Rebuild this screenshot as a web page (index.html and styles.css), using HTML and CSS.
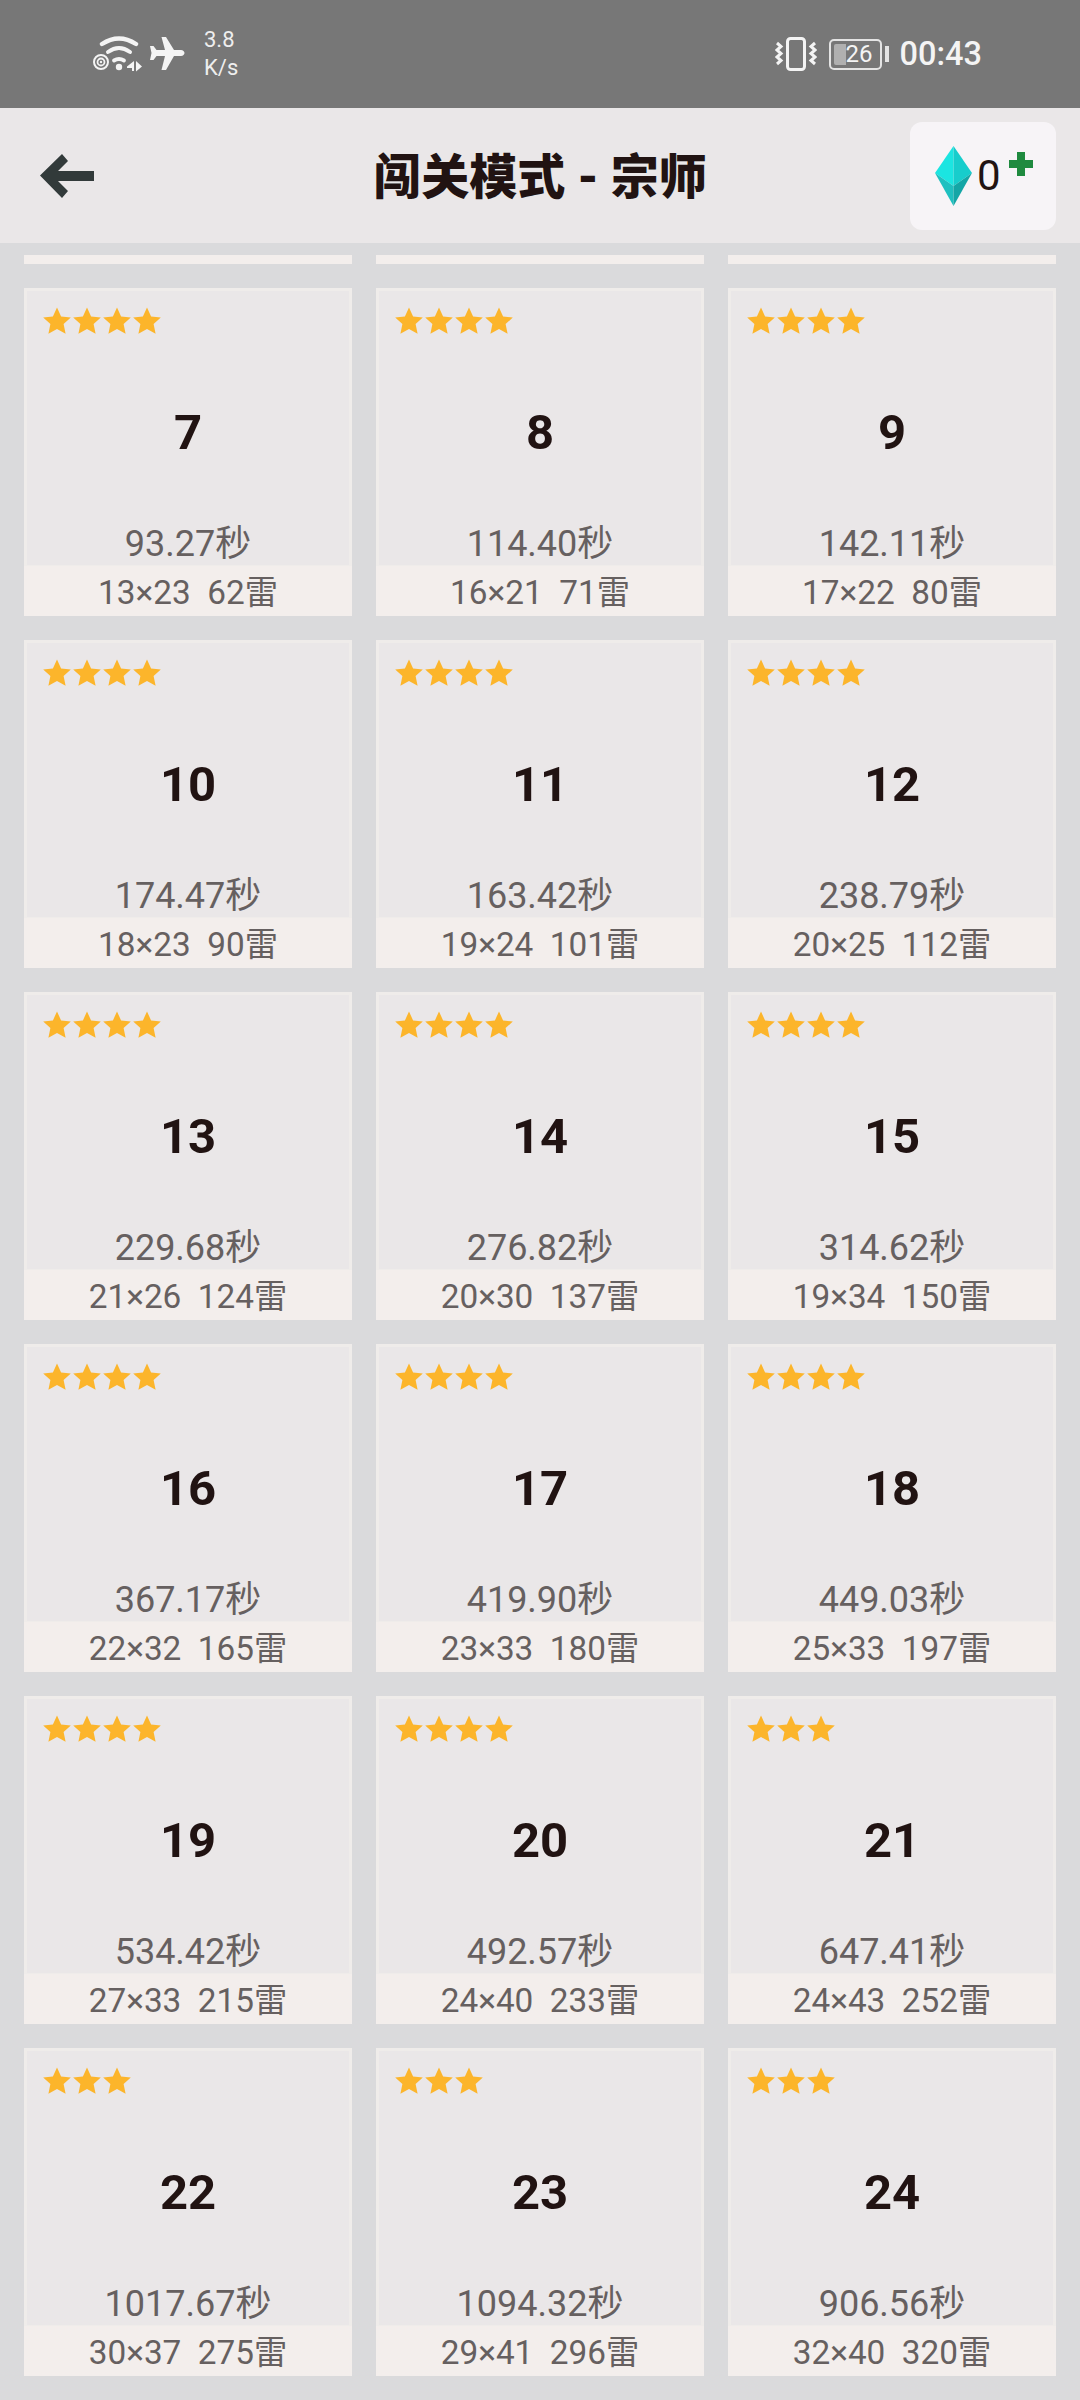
FILE: index.html
```html
<!DOCTYPE html>
<html lang="zh-CN">
<head>
    <meta charset="UTF-8">
    <meta name="viewport" content="width=device-width, initial-scale=1.0">
    <title>闯关模式 - 宗师</title>
    <link rel="stylesheet" href="styles.css">
</head>
<body>
    <svg class="defs" width="0" height="0">
        <symbol id="star" viewBox="0 0 30 30">
            <path d="M15 1.500l4.100 8.900 9.700 1.100-7.200 6.600 2 9.600L15 23l-8.600 4.700 2-9.600-7.200-6.600 9.700-1.100z"/>
        </symbol>
    </svg>

    <div class="status-bar">
        <div class="status-left">
            <svg class="icon-wifi" width="50" height="36" viewBox="0 0 50 36">
                <g fill="none" stroke="#f4f4f4" stroke-linecap="round">
                    <path d="M9 8Q26-3 43 8" stroke-width="4.400"/>
                    <path d="M15 16Q26 8 37 16" stroke-width="4"/>
                    <path d="M21 24.500Q26 21.500 31 24.500" stroke-width="3.800"/>
                    <circle cx="8" cy="26" r="7" stroke-width="2"/>
                    <circle cx="8" cy="26" r="3.500" stroke-width="1.800"/>
                </g>
                <circle cx="26" cy="31" r="3.200" fill="#f4f4f4"/>
                <circle cx="8" cy="26" r="1.200" fill="#f4f4f4"/>
                <path d="M41 25v10h-2v-3h-5v-1.500zM43 25l6 5.500-6 5z" fill="#f4f4f4"/>
            </svg>
            <svg class="icon-plane" width="36" height="36" viewBox="0 0 36 36">
                <path d="M12.500 1h4.500l8 13h7c2 0 3.500 1.500 3.500 3s-1.500 3-3.500 3h-7l-8 14h-4.500l3.500-14H7.500l-3 4H1l1.500-7L1 10h3.500l3 4h8.500z" fill="#f4f4f4"/>
            </svg>
            <div class="speed">3.8<br>K/s</div>
        </div>
        <div class="status-right">
            <svg class="icon-vibrate" width="42" height="36" viewBox="0 0 42 36">
                <rect x="12.500" y="2.500" width="17" height="31" rx="3" fill="none" stroke="#f4f4f4" stroke-width="3"/>
                <g fill="none" stroke="#f4f4f4" stroke-width="3">
                    <path d="M2 7l4 3.500-4 3.500 4 3.500-4 3.500 4 3.500-4 3.500"/>
                    <path d="M40 7l-4 3.500 4 3.500-4 3.500 4 3.500-4 3.500 4 3.500"/>
                </g>
            </svg>
            <div class="battery">
                <div class="battery-body">
                    <span class="battery-fill"></span>
                    <span class="battery-num">26</span>
                </div>
                <span class="battery-tip"></span>
            </div>
            <div class="clock">00:43</div>
        </div>
    </div>

    <header class="top-bar">
        <svg class="icon-back" width="54" height="44" viewBox="0 0 54 44">
            <path d="M0 21.500L22 0l6 7-10 10h36v10H18l10 10-6 7z" fill="#323a3a"/>
        </svg>
        <h1 class="title">闯关模式 - 宗师</h1>
        <div class="gems">
            <svg class="icon-gem" width="37" height="60" viewBox="0 0 36 60" preserveAspectRatio="none">
                <path d="M18 0L0 27l18 13z" fill="#1be5e1"/>
                <path d="M18 0l18 27-18 13z" fill="#17cdcc"/>
                <path d="M0 27l18 33V40z" fill="#1ec0c0"/>
                <path d="M36 27L18 60V40z" fill="#14a6a6"/>
            </svg>
            <span class="gem-count">0</span>
            <svg class="icon-plus" width="24" height="24" viewBox="0 0 24 24">
                <path d="M8 0h8v8h8v8h-8v8H8v-8H0V8h8z" fill="#1f8a3f"/>
            </svg>
        </div>
    </header>

    <main class="levels">
        <div class="cut-row">
            <div class="cut-card"></div>
            <div class="cut-card"></div>
            <div class="cut-card"></div>
        </div>

        <div class="grid">
            <div class="card">
                <div class="card-body">
                    <div class="stars"><svg><use href="#star"/></svg><svg><use href="#star"/></svg><svg><use href="#star"/></svg><svg><use href="#star"/></svg></div>
                    <div class="num">7</div>
                    <div class="time">93.27秒</div>
                </div>
                <div class="info">13×23&nbsp;&nbsp;62雷</div>
            </div>
            <div class="card">
                <div class="card-body">
                    <div class="stars"><svg><use href="#star"/></svg><svg><use href="#star"/></svg><svg><use href="#star"/></svg><svg><use href="#star"/></svg></div>
                    <div class="num">8</div>
                    <div class="time">114.40秒</div>
                </div>
                <div class="info">16×21&nbsp;&nbsp;71雷</div>
            </div>
            <div class="card">
                <div class="card-body">
                    <div class="stars"><svg><use href="#star"/></svg><svg><use href="#star"/></svg><svg><use href="#star"/></svg><svg><use href="#star"/></svg></div>
                    <div class="num">9</div>
                    <div class="time">142.11秒</div>
                </div>
                <div class="info">17×22&nbsp;&nbsp;80雷</div>
            </div>

            <div class="card">
                <div class="card-body">
                    <div class="stars"><svg><use href="#star"/></svg><svg><use href="#star"/></svg><svg><use href="#star"/></svg><svg><use href="#star"/></svg></div>
                    <div class="num">10</div>
                    <div class="time">174.47秒</div>
                </div>
                <div class="info">18×23&nbsp;&nbsp;90雷</div>
            </div>
            <div class="card">
                <div class="card-body">
                    <div class="stars"><svg><use href="#star"/></svg><svg><use href="#star"/></svg><svg><use href="#star"/></svg><svg><use href="#star"/></svg></div>
                    <div class="num">11</div>
                    <div class="time">163.42秒</div>
                </div>
                <div class="info">19×24&nbsp;&nbsp;101雷</div>
            </div>
            <div class="card">
                <div class="card-body">
                    <div class="stars"><svg><use href="#star"/></svg><svg><use href="#star"/></svg><svg><use href="#star"/></svg><svg><use href="#star"/></svg></div>
                    <div class="num">12</div>
                    <div class="time">238.79秒</div>
                </div>
                <div class="info">20×25&nbsp;&nbsp;112雷</div>
            </div>

            <div class="card">
                <div class="card-body">
                    <div class="stars"><svg><use href="#star"/></svg><svg><use href="#star"/></svg><svg><use href="#star"/></svg><svg><use href="#star"/></svg></div>
                    <div class="num">13</div>
                    <div class="time">229.68秒</div>
                </div>
                <div class="info">21×26&nbsp;&nbsp;124雷</div>
            </div>
            <div class="card">
                <div class="card-body">
                    <div class="stars"><svg><use href="#star"/></svg><svg><use href="#star"/></svg><svg><use href="#star"/></svg><svg><use href="#star"/></svg></div>
                    <div class="num">14</div>
                    <div class="time">276.82秒</div>
                </div>
                <div class="info">20×30&nbsp;&nbsp;137雷</div>
            </div>
            <div class="card">
                <div class="card-body">
                    <div class="stars"><svg><use href="#star"/></svg><svg><use href="#star"/></svg><svg><use href="#star"/></svg><svg><use href="#star"/></svg></div>
                    <div class="num">15</div>
                    <div class="time">314.62秒</div>
                </div>
                <div class="info">19×34&nbsp;&nbsp;150雷</div>
            </div>

            <div class="card">
                <div class="card-body">
                    <div class="stars"><svg><use href="#star"/></svg><svg><use href="#star"/></svg><svg><use href="#star"/></svg><svg><use href="#star"/></svg></div>
                    <div class="num">16</div>
                    <div class="time">367.17秒</div>
                </div>
                <div class="info">22×32&nbsp;&nbsp;165雷</div>
            </div>
            <div class="card">
                <div class="card-body">
                    <div class="stars"><svg><use href="#star"/></svg><svg><use href="#star"/></svg><svg><use href="#star"/></svg><svg><use href="#star"/></svg></div>
                    <div class="num">17</div>
                    <div class="time">419.90秒</div>
                </div>
                <div class="info">23×33&nbsp;&nbsp;180雷</div>
            </div>
            <div class="card">
                <div class="card-body">
                    <div class="stars"><svg><use href="#star"/></svg><svg><use href="#star"/></svg><svg><use href="#star"/></svg><svg><use href="#star"/></svg></div>
                    <div class="num">18</div>
                    <div class="time">449.03秒</div>
                </div>
                <div class="info">25×33&nbsp;&nbsp;197雷</div>
            </div>

            <div class="card">
                <div class="card-body">
                    <div class="stars"><svg><use href="#star"/></svg><svg><use href="#star"/></svg><svg><use href="#star"/></svg><svg><use href="#star"/></svg></div>
                    <div class="num">19</div>
                    <div class="time">534.42秒</div>
                </div>
                <div class="info">27×33&nbsp;&nbsp;215雷</div>
            </div>
            <div class="card">
                <div class="card-body">
                    <div class="stars"><svg><use href="#star"/></svg><svg><use href="#star"/></svg><svg><use href="#star"/></svg><svg><use href="#star"/></svg></div>
                    <div class="num">20</div>
                    <div class="time">492.57秒</div>
                </div>
                <div class="info">24×40&nbsp;&nbsp;233雷</div>
            </div>
            <div class="card">
                <div class="card-body">
                    <div class="stars"><svg><use href="#star"/></svg><svg><use href="#star"/></svg><svg><use href="#star"/></svg></div>
                    <div class="num">21</div>
                    <div class="time">647.41秒</div>
                </div>
                <div class="info">24×43&nbsp;&nbsp;252雷</div>
            </div>

            <div class="card">
                <div class="card-body">
                    <div class="stars"><svg><use href="#star"/></svg><svg><use href="#star"/></svg><svg><use href="#star"/></svg></div>
                    <div class="num">22</div>
                    <div class="time">1017.67秒</div>
                </div>
                <div class="info">30×37&nbsp;&nbsp;275雷</div>
            </div>
            <div class="card">
                <div class="card-body">
                    <div class="stars"><svg><use href="#star"/></svg><svg><use href="#star"/></svg><svg><use href="#star"/></svg></div>
                    <div class="num">23</div>
                    <div class="time">1094.32秒</div>
                </div>
                <div class="info">29×41&nbsp;&nbsp;296雷</div>
            </div>
            <div class="card">
                <div class="card-body">
                    <div class="stars"><svg><use href="#star"/></svg><svg><use href="#star"/></svg><svg><use href="#star"/></svg></div>
                    <div class="num">24</div>
                    <div class="time">906.56秒</div>
                </div>
                <div class="info">32×40&nbsp;&nbsp;320雷</div>
            </div>
        </div>
    </main>
</body>
</html>
```

FILE: styles.css
```css
body {
    font-family: Roboto, "Noto Sans CJK SC", sans-serif;
    margin: 0;
    padding: 0;
    width: 1080px;
    height: 2400px;
    overflow: hidden;
    background-color: #dadadc;
}
.defs {
    display: block;
    height: 0;
}

/* status bar */
.status-bar {
    height: 108px;
    background: #777777;
    color: #f4f4f4;
    display: flex;
    justify-content: space-between;
    align-items: center;
    padding: 0 98px 0 93px;
}
.status-left,
.status-right {
    display: flex;
    align-items: center;
}
.icon-plane {
    margin: 0 0 0 6px;
}
.speed {
    font-size: 22px;
    line-height: 28px;
    margin-left: 19px;
    color: #eeeeee;
}
.battery {
    display: flex;
    align-items: center;
    gap: 3px;
    margin-left: 12px;
}
.battery-body {
    position: relative;
    width: 49px;
    height: 27px;
    border: 2px solid #e4e4e4;
    border-radius: 5px;
    display: flex;
    align-items: center;
    justify-content: center;
}
.battery-fill {
    position: absolute;
    left: 3px;
    top: 3px;
    bottom: 3px;
    width: 12px;
    background: #b0b0b0;
    border-radius: 2px 0 0 2px;
}
.battery-num {
    position: relative;
    font-size: 24px;
    color: #f4f4f4;
    margin-left: 8px;
}
.battery-tip {
    width: 4px;
    height: 16px;
    background: #e4e4e4;
}
.clock {
    font-size: 32.500px;
    font-weight: 500;
    margin-left: 11px;
}

/* header */
.top-bar {
    height: 135px;
    background: #eae7e8;
    display: grid;
    grid-template-columns: 1fr auto 1fr;
    align-items: center;
    padding: 0 24px 0 40px;
}
.icon-back {
    display: block;
}
.title {
    margin: 0 0 5px -16px;
    font-size: 48px;
    font-weight: 900;
    color: #211312;
}
.gems {
    justify-self: end;
    width: 146px;
    height: 108px;
    background: #f7f4f7;
    border-radius: 12px;
    display: flex;
    align-items: center;
    padding-left: 25px;
    box-sizing: border-box;
}
.gem-count {
    font-size: 42px;
    color: #211312;
    margin-left: 5px;
}
.icon-plus {
    margin: -24px 0 0 8px;
}

/* level list */
.levels {
    padding: 12px 24px 0;
}
.cut-row,
.grid {
    display: grid;
    grid-template-columns: repeat(3, 328px);
    column-gap: 24px;
}
.cut-card {
    height: 9px;
    background: #f3eeec;
}
.grid {
    row-gap: 24px;
    margin-top: 24px;
}
.card {
    height: 328px;
    display: flex;
    flex-direction: column;
    background: #f3eeec;
}
.card-body {
    flex: 1;
    display: flex;
    flex-direction: column;
    background: #eae7e8;
    border: 3px solid #efecea;
    border-bottom-width: 1px;
    padding: 15px 0 0 15px;
}
.stars {
    display: flex;
    height: 30px;
}
.stars svg {
    width: 30px;
    height: 30px;
    fill: #fcb52b;
}
.num {
    font-size: 49px;
    font-weight: 700;
    color: #211312;
    text-align: center;
    line-height: 56px;
    margin: 69px 15px 0 0;
}
.time {
    font-size: 36px;
    line-height: 40px;
    color: #666060;
    text-align: center;
    margin: 63px 15px 0 0;
}
.info {
    height: 50px;
    box-sizing: border-box;
    padding-top: 3px;
    line-height: 48px;
    font-size: 33.300px;
    color: #666060;
    text-align: center;
}
```
